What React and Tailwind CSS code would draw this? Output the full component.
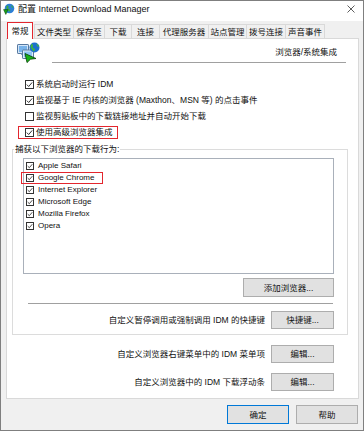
import React from "react";

const tabs = [
  ["文件类型", "w-[40px] ml-[1px]"],
  ["保存至", "w-[32px] -ml-px"],
  ["下载", "w-[28px] -ml-px"],
  ["连接", "w-[29px] -ml-px"],
  ["代理服务器", "w-[50px] -ml-px"],
  ["站点管理", "w-[39px] -ml-px"],
  ["拨号连接", "w-[40px] -ml-px"],
  ["声音事件", "w-[40px] -ml-px"],
];

const browsers = ["Apple Safari", "Google Chrome", "Internet Explorer", "Microsoft Edge", "Mozilla Firefox", "Opera"];

function Check({ on, small }) {
  return (
    <span
      className={`flex shrink-0 items-center justify-center border border-[#333] bg-white ${
        small ? "h-[8px] w-[8px]" : "h-[9px] w-[9px]"
      }`}
    >
      {on && (
        <svg viewBox="0 0 7 7" className={small ? "h-[6px] w-[6px]" : "h-[7px] w-[7px]"}>
          <path d="M0.8 3.6 L2.7 5.5 L6.2 1.4" fill="none" stroke="#1a1a1a" strokeWidth="0.9" />
        </svg>
      )}
    </span>
  );
}

function Btn({ children, className = "" }) {
  return (
    <div
      className={`flex items-center justify-center border border-[#adadad] bg-[#e1e1e1] text-[8.5px] leading-[12px] text-[#111] ${className}`}
    >
      {children}
    </div>
  );
}

function TitleIcon() {
  return (
    <svg viewBox="0 0 12 12" className="h-[12px] w-[12px]">
      <circle cx="6.5" cy="5.5" r="4.8" fill="#2d7fd6" />
      <path d="M4 2.2 q2 0.5 1.6 2 q-1 0.8 0.2 1.8 l1.5 0.4 q0.4 1.5 -1 2.4 q-1.2 -0.6 -1.4 -2 q-1.6 -0.8 -1.6 -2.6 z" fill="#3cae3c" />
      <path d="M8.5 2 q1.5 1 1.8 2.8 l-1.4 -0.3 q-0.6 -1 -0.4 -2.5 z" fill="#3cae3c" />
      <polygon points="0.6,6.6 5,6.6 2.8,11.4" fill="#19a319" stroke="#0b4d0b" strokeWidth="0.6" />
    </svg>
  );
}

function HeaderIcon() {
  return (
    <svg viewBox="0 0 23 21" className="h-[21px] w-[23px]">
      <rect x="0.5" y="2.5" width="11" height="9" rx="0.6" fill="#d3e5f7" stroke="#56789f" />
      <rect x="2" y="4" width="8" height="6" fill="#78b3ea" />
      <rect x="4" y="11.5" width="4" height="1.5" fill="#8aa3bf" />
      <rect x="5.5" y="8" width="11" height="8.5" rx="0.6" fill="#dcebf9" stroke="#56789f" />
      <rect x="7" y="9.5" width="8" height="5.5" fill="#8cc4f2" />
      <circle cx="17.5" cy="5.5" r="5" fill="#1c6fcf" />
      <path d="M14.6 1.8 q2 0.6 1.4 2.3 q-1 0.9 0 2 l1.8 0.6 q0.6 1.6 -1 2.7 q-1.4 -0.6 -1.6 -2.2 q-1.8 -0.9 -1.6 -2.9 z" fill="#3db53d" />
      <path d="M19.5 1.5 q2 1 2.5 3.2 l-1.6 -0.2 q-0.8 -1.2 -0.9 -3 z" fill="#3db53d" />
      <polygon points="8,11.5 19,16.5 13.5,17.2 10,20.6" fill="#17b217" stroke="#083d08" strokeWidth="0.8" />
    </svg>
  );
}

export default function App() {
  return (
    <div className="flex h-[431px] w-[364px] flex-col border border-[#7f7f7f] bg-[#f0f0f0] font-['Liberation_Sans','Noto_Sans_CJK_SC',sans-serif] text-[#111]">
      {/* title bar */}
      <div className="flex h-[20px] shrink-0 items-center bg-white pb-[4px] pl-[2px] pr-[8px]">
        <TitleIcon />
        <span className="ml-[3px] text-[9px] leading-[12px] text-[#111]">配置 Internet Download Manager</span>
        <svg viewBox="0 0 8 8" className="ml-auto h-[8px] w-[8px]">
          <path d="M0.5 0.5 L7.5 7.5 M7.5 0.5 L0.5 7.5" stroke="#333" strokeWidth="0.8" />
        </svg>
      </div>

      {/* tabs */}
      <div className="flex h-[17px] shrink-0 items-end pl-[6px]">
        <div className="relative z-10 -mb-px flex h-[17px] w-[26px] items-center justify-center border border-b-0 border-[#e3262e] bg-white text-[8.5px] leading-[12px]">
          常规
        </div>
        {tabs.map(([t, cls]) => (
          <div
            key={t}
            className={`flex h-[14px] items-center justify-center border border-b-0 border-[#d9d9d9] bg-[#f0f0f0] text-[8.5px] leading-[12px] ${cls}`}
          >
            {t}
          </div>
        ))}
      </div>

      {/* panel */}
      <div className="ml-[5px] flex h-[361px] w-[353px] shrink-0 flex-col border border-[#d9d9d9] bg-white">
        <div className="flex">
          <div className="ml-[10px] mt-[3px]">
            <HeaderIcon />
          </div>
          <div className="ml-[12px] mr-[12px] flex flex-1 flex-col">
            <div className="mt-[7px] pr-[9px] text-right text-[8.5px] leading-[12px]">浏览器/系统集成</div>
            <div className="mt-[4px] h-px bg-[#a0a0a0]" />
          </div>
        </div>

        <div className="mt-[13px] flex flex-col text-[8.5px] leading-[12px]">
          <div className="flex h-[16px] items-center gap-[2px] pl-[18px]">
            <Check on />
            <span>系统启动时运行 IDM</span>
          </div>
          <div className="flex h-[16px] items-center gap-[2px] pl-[18px]">
            <Check on />
            <span>监视基于 IE 内核的浏览器 (Maxthon、MSN 等) 的点击事件</span>
          </div>
          <div className="flex h-[16px] items-center gap-[2px] pl-[18px]">
            <Check />
            <span>监视剪贴板中的下载链接地址并自动开始下载</span>
          </div>
          <div className="flex h-[16px] items-center pl-[11px]">
            <div className="flex h-[13px] w-[100px] items-center gap-[2px] border border-[#e3262e] pl-[6px]">
              <Check on />
              <span>使用高级浏览器集成</span>
            </div>
          </div>
        </div>

        {/* group box */}
        <div className="ml-[5px] mr-[10px] mt-[9px] flex flex-col border border-[#dcdcdc] pb-[5px] text-[8.5px] leading-[12px]">
          <div className="-mt-[7px] ml-[1px] self-start bg-white px-px leading-[13px]">捕获以下浏览器的下载行为:</div>
          <div className="ml-[10px] mr-[13px] mt-[2px] flex h-[116px] flex-col border border-[#a9b0ba] pt-px">
            {browsers.map((b) => (
              <div key={b} className="relative flex h-[12px] items-center pl-[2px]">
                <Check on small />
                <span className="ml-[4px] text-[8px] leading-[10px] text-[#111]">{b}</span>
                {b === "Google Chrome" && (
                  <span className="absolute -left-[3px] top-0 h-[12px] w-[82px] border border-[#e3262e]" />
                )}
              </div>
            ))}
          </div>
          <Btn className="mr-[13px] mt-[4px] h-[19px] w-[91px] self-end">添加浏览器...</Btn>
          <div className="ml-[15px] mr-[14px] mt-[6px] h-px bg-[#a0a0a0]" />
          <div className="mr-[13px] mt-[7px] flex items-center justify-end gap-[6px]">
            <span>自定义暂停调用或强制调用 IDM 的快捷键</span>
            <Btn className="h-[18px] w-[63px]">快捷键...</Btn>
          </div>
        </div>

        <div className="mr-[24px] mt-[10px] flex items-center justify-end gap-[6px] text-[8.5px] leading-[12px]">
          <span>自定义浏览器右键菜单中的 IDM 菜单项</span>
          <Btn className="h-[18px] w-[63px]">编辑...</Btn>
        </div>
        <div className="mr-[24px] mt-[10px] flex items-center justify-end gap-[6px] text-[8.5px] leading-[12px]">
          <span>自定义浏览器中的 IDM 下载浮动条</span>
          <Btn className="h-[18px] w-[63px]">编辑...</Btn>
        </div>
      </div>

      {/* dialog buttons */}
      <div className="mt-[6px] flex justify-end gap-[7px] pr-[5px]">
        <Btn className="h-[19px] w-[62px] !border-[#0078d7]">确定</Btn>
        <Btn className="h-[19px] w-[62px]">帮助</Btn>
      </div>
    </div>
  );
}
